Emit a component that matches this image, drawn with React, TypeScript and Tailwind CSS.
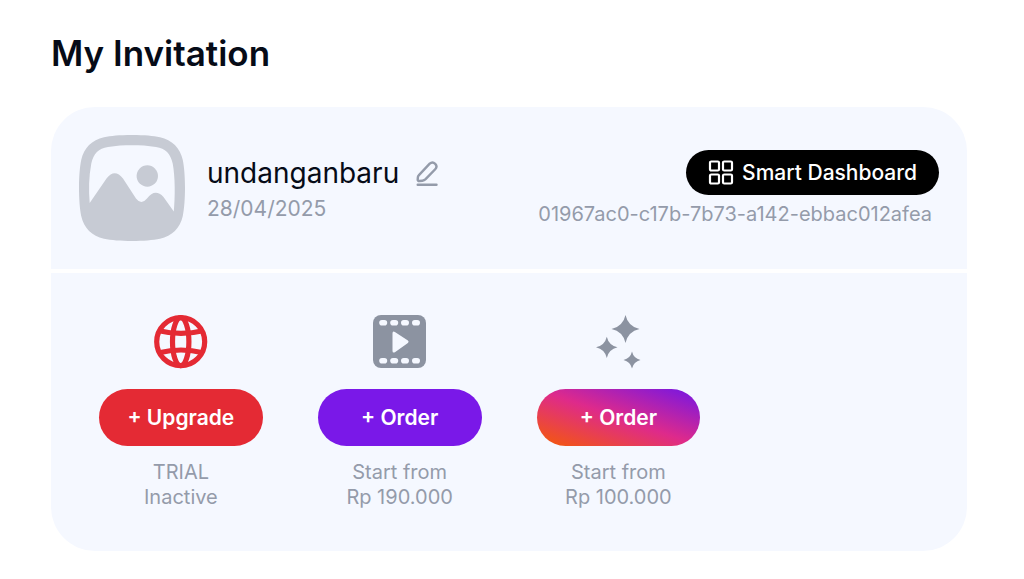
import type { ReactNode } from "react"

const GlobeIcon = () => (
  <svg className="size-[54px]" viewBox="0 0 54 54" fill="none" stroke="#e42a34" strokeWidth="5.2" aria-hidden="true">
    <circle cx="26.700" cy="26.700" r="24" />
    <ellipse cx="26.700" cy="26.700" rx="8.2" ry="24" />
    <path d="M5 15.700Q27 21 49 15.700M5 37.700Q27 32.300 49 37.700" />
  </svg>
)

const FilmIcon = () => (
  <svg className="size-[54px]" viewBox="0 0 54 54" aria-hidden="true">
    <rect x="0" y="0" width="53" height="53" rx="8" fill="#8c93a1" />
    <g fill="#f5f8ff">
      {[6.200, 17.200, 28, 39].map((x) => (
        <g key={x}>
          <rect x={x} y="4.900" width="8" height="5.600" rx="2.800" />
          <rect x={x} y="42.900" width="8" height="5.600" rx="2.800" />
        </g>
      ))}
      <path d="M19.500 18.500q0-2.800 2.400-1.500l13 8.500q1.500 1.200 0 2.400l-13 9.300q-2.400 1.300-2.400-1.500z" />
    </g>
  </svg>
)

const SparklesIcon = () => (
  <svg className="size-[54px]" viewBox="0 0 54 54" fill="#8c93a1" aria-hidden="true">
    <path d="M34.500 0Q37 11.500 48.500 14Q37 16.500 34.500 28Q32 16.500 20.500 14Q32 11.500 34.500 0Z" />
    <path d="M15.800 21.700Q17.800 30.300 26.500 32.300Q17.800 34.300 15.800 43Q13.800 34.300 5 32.300Q13.800 30.300 15.800 21.700Z" />
    <path d="M41 36.500Q42.600 43.400 49.500 45Q42.600 46.600 41 53.500Q39.400 46.600 32.500 45Q39.400 43.400 41 36.500Z" />
  </svg>
)

const PictureIcon = () => (
  <svg className="size-[106px] shrink-0" viewBox="0 0 106 106" aria-hidden="true">
    <path
      fill="#c7cbd4"
      fillRule="evenodd"
      d="M53 0C66 0 74 0.800 81 2.200C93 4.800 101.200 13 103.800 25C105.200 32 106 42 106 53C106 64 105.200 74 103.800 81C101.200 93 93 101.200 81 103.800C74 105.200 64 106 53 106C42 106 32 105.200 25 103.800C13 101.200 4.800 93 2.200 81C0.800 74 0 64 0 53C0 42 0.800 32 2.200 25C4.800 13 13 4.800 25 2.200C32 0.800 40 0 53 0ZM10.700 68L27.500 43.500Q35.700 33 44 43.500L57 63.500Q62.300 70.500 68 63.500Q76 53 84.500 62L94.800 76.500C96.200 62 96.200 42 93.700 28.500C91.500 18.500 86.500 13.500 77 12C69 10.700 61 10.300 53 10.300C45 10.300 37 10.700 29 12C19.500 13.500 14.500 18.500 12.300 28.500C9.800 42 9.600 55 10.700 68Z"
    />
    <circle cx="68.300" cy="41" r="10.700" fill="#c7cbd4" />
  </svg>
)

const EditIcon = () => (
  <svg className="h-[26px] w-[22px]" viewBox="0 0 22 26" fill="none" stroke="#949baa" strokeWidth="2.400" strokeLinecap="round" strokeLinejoin="round" aria-hidden="true">
    <path d="M2.700 15.300L13.700 3.700Q16.500 1.200 19.200 3.800Q21.800 6.500 19.200 9.300L9.600 19.200Q8.200 20.500 6.400 20.700L3.400 21Q1.700 21 1.700 19.400L1.900 17.200Q2 16 2.700 15.300Z" />
    <path d="M1.700 24.700H20.500" />
  </svg>
)

const DashboardIcon = () => (
  <svg className="size-[26px]" viewBox="0 0 26 26" fill="none" stroke="currentColor" strokeWidth="2.200" aria-hidden="true">
    <rect x="2" y="1.500" width="9" height="9" rx="1.200" />
    <rect x="15" y="1.500" width="9" height="9" rx="1.200" />
    <rect x="2" y="14.500" width="9" height="9" rx="1.200" />
    <rect x="15" y="14.500" width="9" height="9" rx="1.200" />
  </svg>
)

type ServiceProps = {
  icon: ReactNode
  label: string
  color: string
  lines: [string, string]
}

const Service = ({ icon, label, color, lines }: ServiceProps) => (
  <div className="flex flex-col items-center">
    {icon}
    <button type="button" className={`mt-5 h-[57px] w-full rounded-full text-[21px] font-semibold text-white ${color}`}>
      {label}
    </button>
    <p className="mt-3.5 text-center text-xl leading-[25px] text-[#949baa]">
      {lines[0]}
      <br />
      {lines[1]}
    </p>
  </div>
)

export default function App() {
  return (
    <main className="bg-white px-[51px] pt-8 pb-7 font-['Inter','Liberation_Sans',sans-serif] text-[#060b17]">
      <h1 className="text-[35px] leading-[42px] font-semibold">My Invitation</h1>

      <section className="mt-[33px] mr-[6px] overflow-hidden rounded-[44px]">
        {/* Invitation header */}
        <div className="flex items-start justify-between bg-[#f5f8ff] px-7 py-7">
          <div className="flex gap-[22px]">
            <PictureIcon />
            <div className="pt-5">
              <div className="flex items-center gap-[17px]">
                <h2 className="text-[28px] leading-9">undanganbaru</h2>
                <button type="button" aria-label="Edit name">
                  <EditIcon />
                </button>
              </div>
              <p className="text-[21px] leading-9 text-[#949baa]">28/04/2025</p>
            </div>
          </div>
          <div className="flex flex-col items-end pt-[15px]">
            <button type="button" className="flex h-[45px] items-center gap-2 rounded-full bg-black px-[22px] text-[21px] font-medium text-white">
              <DashboardIcon />
              Smart Dashboard
            </button>
            <p className="mt-1 pr-[7px] text-xl leading-[30px] text-[#949baa]">01967ac0-c17b-7b73-a142-ebbac012afea</p>
          </div>
        </div>

        {/* Services */}
        <div className="mt-1 grid grid-cols-4 gap-[55px] bg-[#f5f8ff] px-12 pt-[42px] pb-[41px]">
          <Service icon={<GlobeIcon />} label="+ Upgrade" color="bg-[#e42a34]" lines={["TRIAL", "Inactive"]} />
          <Service icon={<FilmIcon />} label="+ Order" color="bg-[#7a18e8]" lines={["Start from", "Rp 190.000"]} />
          <Service
            icon={<SparklesIcon />}
            label="+ Order"
            color="bg-linear-to-tr/srgb from-[#f55b05] via-[#de2a8b] to-[#7216e6]"
            lines={["Start from", "Rp 100.000"]}
          />
        </div>
      </section>
    </main>
  )
}
